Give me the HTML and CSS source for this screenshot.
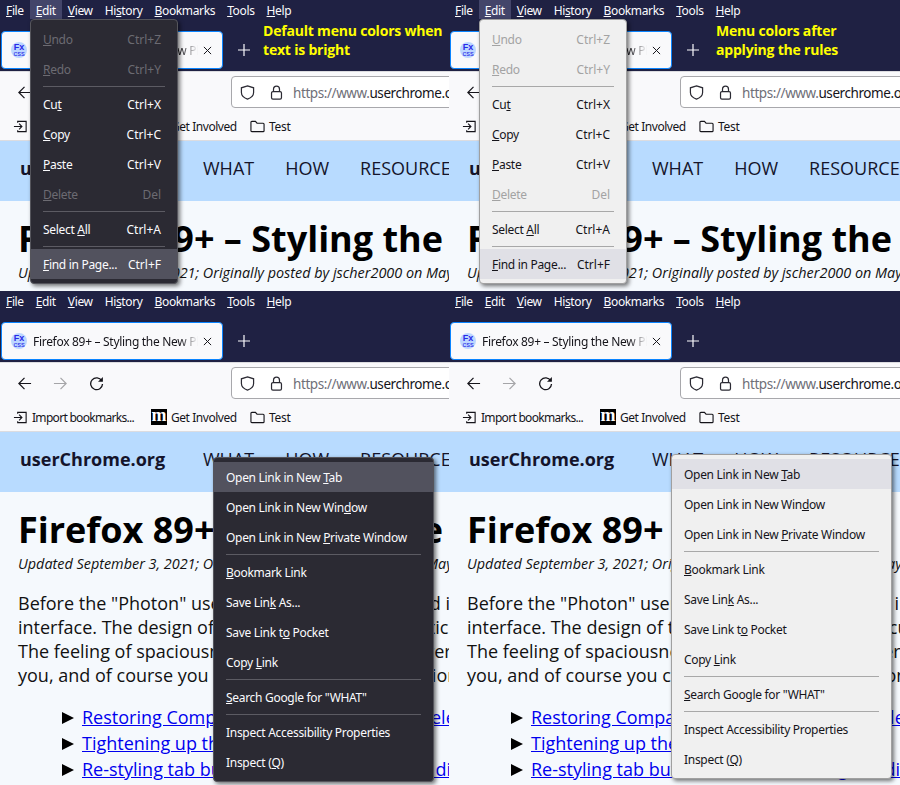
FILE: index.html
```html
<!DOCTYPE html>
<html lang="en">
<head>
  <meta charset="UTF-8" />
  <meta name="viewport" content="width=device-width, initial-scale=1.0" />
  <title>Firefox menu colors</title>
  <link rel="stylesheet" href="styles.css">
</head>
<body>
  <svg class="icon-defs" width="0" height="0">
    <symbol id="i-back" viewBox="0 0 16 16"><path d="M15 8H2M8 2L2 8l6 6" fill="none" stroke="currentColor" stroke-width="1.3"/></symbol>
    <symbol id="i-forward" viewBox="0 0 16 16"><path d="M1 8h13M8 2l6 6-6 6" fill="none" stroke="currentColor" stroke-width="1.3"/></symbol>
    <symbol id="i-reload" viewBox="0 0 16 16"><path d="M13.6 5.2A6.3 6.3 0 1 0 14.4 8.500" fill="none" stroke="currentColor" stroke-width="1.4"/><path d="M14.800 1v5.200H9.600z" fill="currentColor"/></symbol>
    <symbol id="i-shield" viewBox="0 0 16 16"><path d="M8 1l6.500 2v5c0 3.500-3 5.800-6.500 7C4.500 13.800 1.500 11.500 1.500 8V3z" fill="none" stroke="currentColor" stroke-width="1.3"/></symbol>
    <symbol id="i-lock" viewBox="0 0 16 16"><rect x="2.700" y="7" width="10.600" height="8" rx="1.500" fill="none" stroke="currentColor" stroke-width="1.3"/><path d="M4.800 7V4.500a3.200 3.200 0 0 1 6.400 0V7" fill="none" stroke="currentColor" stroke-width="1.3"/></symbol>
    <symbol id="i-import" viewBox="0 0 16 16"><path d="M5 4V2.500h9v11H5V12" fill="none" stroke="currentColor" stroke-width="1.200"/><path d="M1 8h8M6.500 5l3 3-3 3" fill="none" stroke="currentColor" stroke-width="1.200"/></symbol>
    <symbol id="i-folder" viewBox="0 0 16 16"><path d="M1 3.500q0-1 1-1h3.800l1.700 2H14q1 0 1 1v7q0 1-1 1H2q-1 0-1-1z" fill="none" stroke="currentColor" stroke-width="1.200"/></symbol>
    <symbol id="i-close" viewBox="0 0 10 10"><path d="M1 1l8 8M9 1l-8 8" fill="none" stroke="currentColor" stroke-width="1.100"/></symbol>
    <symbol id="i-plus" viewBox="0 0 12 12"><path d="M6 0v12M0 6h12" fill="none" stroke="currentColor" stroke-width="1.200"/></symbol>
  </svg>

  <div class="shots">

    <section class="shot shot-top">
      <nav class="menubar">
        <span class="mb-item"><u>F</u>ile</span><span class="mb-item active"><u>E</u>dit</span><span class="mb-item"><u>V</u>iew</span><span class="mb-item">Hi<u>s</u>tory</span><span class="mb-item"><u>B</u>ookmarks</span><span class="mb-item"><u>T</u>ools</span><span class="mb-item"><u>H</u>elp</span>
      </nav>
      <div class="tabbar">
        <div class="tab">
          <span class="favicon"><b>Fx</b><b class="fav-css">css</b></span>
          <span class="tab-title">Firefox 89+ – Styling the New Photon</span>
          <svg class="tab-close"><use href="#i-close"/></svg>
        </div>
        <svg class="new-tab"><use href="#i-plus"/></svg>
        <p class="caption caption-left">Default menu colors when<br>text is bright</p>
      </div>
      <div class="toolbar">
        <svg class="nav-icon"><use href="#i-back"/></svg>
        <svg class="nav-icon off"><use href="#i-forward"/></svg>
        <svg class="nav-icon"><use href="#i-reload"/></svg>
        <div class="urlbar">
          <svg class="url-icon"><use href="#i-shield"/></svg>
          <svg class="url-icon"><use href="#i-lock"/></svg>
          <span class="url"><span class="url-dim">https://www.</span>userchrome.org/firefox-89-styling-new-proton</span>
        </div>
      </div>
      <div class="bookmarks">
        <svg class="bm-icon"><use href="#i-import"/></svg><span class="bm-text bm-import">Import bookmarks...</span>
        <span class="bm-m">m</span><span class="bm-text bm-involved">Get Involved</span>
        <svg class="bm-icon"><use href="#i-folder"/></svg><span class="bm-text">Test</span>
      </div>
      <header class="site-head">
        <span class="site-name">userChrome.org</span>
        <span class="site-link">WHAT</span><span class="site-link">HOW</span><span class="site-link">RESOURCES</span>
      </header>
      <main class="article">
        <h1>Firefox 89+ – Styling the New Proton</h1>
        <p class="byline">Updated September 3, 2021; Originally posted by jscher2000 on May 24, 2021</p>
      </main>
      <div class="menu dark menu-edit">
        <div class="row off"><span><u>U</u>ndo</span><span>Ctrl+Z</span></div>
        <div class="row off"><span><u>R</u>edo</span><span>Ctrl+Y</span></div>
        <hr>
        <div class="row"><span>Cu<u>t</u></span><span>Ctrl+X</span></div>
        <div class="row"><span><u>C</u>opy</span><span>Ctrl+C</span></div>
        <div class="row"><span><u>P</u>aste</span><span>Ctrl+V</span></div>
        <div class="row off"><span><u>D</u>elete</span><span>Del</span></div>
        <hr>
        <div class="row"><span>Select <u>A</u>ll</span><span>Ctrl+A</span></div>
        <hr>
        <div class="row hover"><span><u>F</u>ind in Page...</span><span>Ctrl+F</span></div>
      </div>
    </section>

    <section class="shot shot-top">
      <nav class="menubar">
        <span class="mb-item"><u>F</u>ile</span><span class="mb-item active"><u>E</u>dit</span><span class="mb-item"><u>V</u>iew</span><span class="mb-item">Hi<u>s</u>tory</span><span class="mb-item"><u>B</u>ookmarks</span><span class="mb-item"><u>T</u>ools</span><span class="mb-item"><u>H</u>elp</span>
      </nav>
      <div class="tabbar">
        <div class="tab">
          <span class="favicon"><b>Fx</b><b class="fav-css">css</b></span>
          <span class="tab-title">Firefox 89+ – Styling the New Photon</span>
          <svg class="tab-close"><use href="#i-close"/></svg>
        </div>
        <svg class="new-tab"><use href="#i-plus"/></svg>
        <p class="caption caption-right">Menu colors after<br>applying the rules</p>
      </div>
      <div class="toolbar">
        <svg class="nav-icon"><use href="#i-back"/></svg>
        <svg class="nav-icon off"><use href="#i-forward"/></svg>
        <svg class="nav-icon"><use href="#i-reload"/></svg>
        <div class="urlbar">
          <svg class="url-icon"><use href="#i-shield"/></svg>
          <svg class="url-icon"><use href="#i-lock"/></svg>
          <span class="url"><span class="url-dim">https://www.</span>userchrome.org/firefox-89-styling-new-proton</span>
        </div>
      </div>
      <div class="bookmarks">
        <svg class="bm-icon"><use href="#i-import"/></svg><span class="bm-text bm-import">Import bookmarks...</span>
        <span class="bm-m">m</span><span class="bm-text bm-involved">Get Involved</span>
        <svg class="bm-icon"><use href="#i-folder"/></svg><span class="bm-text">Test</span>
      </div>
      <header class="site-head">
        <span class="site-name">userChrome.org</span>
        <span class="site-link">WHAT</span><span class="site-link">HOW</span><span class="site-link">RESOURCES</span>
      </header>
      <main class="article">
        <h1>Firefox 89+ – Styling the New Proton</h1>
        <p class="byline">Updated September 3, 2021; Originally posted by jscher2000 on May 24, 2021</p>
      </main>
      <div class="menu light menu-edit">
        <div class="row off"><span><u>U</u>ndo</span><span>Ctrl+Z</span></div>
        <div class="row off"><span><u>R</u>edo</span><span>Ctrl+Y</span></div>
        <hr>
        <div class="row"><span>Cu<u>t</u></span><span>Ctrl+X</span></div>
        <div class="row"><span><u>C</u>opy</span><span>Ctrl+C</span></div>
        <div class="row"><span><u>P</u>aste</span><span>Ctrl+V</span></div>
        <div class="row off"><span><u>D</u>elete</span><span>Del</span></div>
        <hr>
        <div class="row"><span>Select <u>A</u>ll</span><span>Ctrl+A</span></div>
        <hr>
        <div class="row hover"><span><u>F</u>ind in Page...</span><span>Ctrl+F</span></div>
      </div>
    </section>

    <section class="shot">
      <nav class="menubar">
        <span class="mb-item"><u>F</u>ile</span><span class="mb-item"><u>E</u>dit</span><span class="mb-item"><u>V</u>iew</span><span class="mb-item">Hi<u>s</u>tory</span><span class="mb-item"><u>B</u>ookmarks</span><span class="mb-item"><u>T</u>ools</span><span class="mb-item"><u>H</u>elp</span>
      </nav>
      <div class="tabbar">
        <div class="tab">
          <span class="favicon"><b>Fx</b><b class="fav-css">css</b></span>
          <span class="tab-title">Firefox 89+ – Styling the New Photon</span>
          <svg class="tab-close"><use href="#i-close"/></svg>
        </div>
        <svg class="new-tab"><use href="#i-plus"/></svg>
      </div>
      <div class="toolbar">
        <svg class="nav-icon"><use href="#i-back"/></svg>
        <svg class="nav-icon off"><use href="#i-forward"/></svg>
        <svg class="nav-icon"><use href="#i-reload"/></svg>
        <div class="urlbar">
          <svg class="url-icon"><use href="#i-shield"/></svg>
          <svg class="url-icon"><use href="#i-lock"/></svg>
          <span class="url"><span class="url-dim">https://www.</span>userchrome.org/firefox-89-styling-new-proton</span>
        </div>
      </div>
      <div class="bookmarks">
        <svg class="bm-icon"><use href="#i-import"/></svg><span class="bm-text bm-import">Import bookmarks...</span>
        <span class="bm-m">m</span><span class="bm-text bm-involved">Get Involved</span>
        <svg class="bm-icon"><use href="#i-folder"/></svg><span class="bm-text">Test</span>
      </div>
      <header class="site-head">
        <span class="site-name">userChrome.org</span>
        <span class="site-link">WHAT</span><span class="site-link">HOW</span><span class="site-link">RESOURCES</span>
      </header>
      <main class="article">
        <h1>Firefox 89+ – Styling the New Proton</h1>
        <p class="byline">Updated September 3, 2021; Originally posted by jscher2000 on May 24, 2021</p>
        <p class="lead">Before the "Photon" user interface was introduced in<br>interface. The design of the tab bars was also particular<br>The feeling of spaciousness is greater in your newer<br>you, and of course you can also replace these options</p>
        <ul class="links">
          <li><a href="#">Restoring Compact Mode and Tab Styling elements</a></li>
          <li><a href="#">Tightening up the menus and bars</a></li>
          <li><a href="#">Re-styling tab button and then adding the dividers</a></li>
        </ul>
      </main>
      <div class="menu dark menu-link">
        <div class="row hover"><span>Open Link in New <u>T</u>ab</span></div>
        <div class="row"><span>Open Link in New Win<u>d</u>ow</span></div>
        <div class="row"><span>Open Link in New <u>P</u>rivate Window</span></div>
        <hr>
        <div class="row"><span><u>B</u>ookmark Link</span></div>
        <div class="row"><span>Save Lin<u>k</u> As...</span></div>
        <div class="row"><span>Save Link t<u>o</u> Pocket</span></div>
        <div class="row"><span>Copy <u>L</u>ink</span></div>
        <hr>
        <div class="row"><span><u>S</u>earch Google for "WHAT"</span></div>
        <hr>
        <div class="row"><span>Inspect Accessibility Properties</span></div>
        <div class="row"><span>Inspect (<u>Q</u>)</span></div>
      </div>
    </section>

    <section class="shot">
      <nav class="menubar">
        <span class="mb-item"><u>F</u>ile</span><span class="mb-item"><u>E</u>dit</span><span class="mb-item"><u>V</u>iew</span><span class="mb-item">Hi<u>s</u>tory</span><span class="mb-item"><u>B</u>ookmarks</span><span class="mb-item"><u>T</u>ools</span><span class="mb-item"><u>H</u>elp</span>
      </nav>
      <div class="tabbar">
        <div class="tab">
          <span class="favicon"><b>Fx</b><b class="fav-css">css</b></span>
          <span class="tab-title">Firefox 89+ – Styling the New Photon</span>
          <svg class="tab-close"><use href="#i-close"/></svg>
        </div>
        <svg class="new-tab"><use href="#i-plus"/></svg>
      </div>
      <div class="toolbar">
        <svg class="nav-icon"><use href="#i-back"/></svg>
        <svg class="nav-icon off"><use href="#i-forward"/></svg>
        <svg class="nav-icon"><use href="#i-reload"/></svg>
        <div class="urlbar">
          <svg class="url-icon"><use href="#i-shield"/></svg>
          <svg class="url-icon"><use href="#i-lock"/></svg>
          <span class="url"><span class="url-dim">https://www.</span>userchrome.org/firefox-89-styling-new-proton</span>
        </div>
      </div>
      <div class="bookmarks">
        <svg class="bm-icon"><use href="#i-import"/></svg><span class="bm-text bm-import">Import bookmarks...</span>
        <span class="bm-m">m</span><span class="bm-text bm-involved">Get Involved</span>
        <svg class="bm-icon"><use href="#i-folder"/></svg><span class="bm-text">Test</span>
      </div>
      <header class="site-head">
        <span class="site-name">userChrome.org</span>
        <span class="site-link">WHAT</span><span class="site-link">HOW</span><span class="site-link">RESOURCES</span>
      </header>
      <main class="article">
        <h1>Firefox 89+ – Styling the New Proton</h1>
        <p class="byline">Updated September 3, 2021; Originally posted by jscher2000 on May 24, 2021</p>
        <p class="lead">Before the "Photon" user interface was introduced in<br>interface. The design of the tab bars was also particular<br>The feeling of spaciousness is greater in your newer<br>you, and of course you can also replace these options</p>
        <ul class="links">
          <li><a href="#">Restoring Compact Mode and Tab Styling elements</a></li>
          <li><a href="#">Tightening up the menus and bars</a></li>
          <li><a href="#">Re-styling tab button and then adding the dividers</a></li>
        </ul>
      </main>
      <div class="menu light menu-link menu-link-right">
        <div class="row hover"><span>Open Link in New <u>T</u>ab</span></div>
        <div class="row"><span>Open Link in New Win<u>d</u>ow</span></div>
        <div class="row"><span>Open Link in New <u>P</u>rivate Window</span></div>
        <hr>
        <div class="row"><span><u>B</u>ookmark Link</span></div>
        <div class="row"><span>Save Lin<u>k</u> As...</span></div>
        <div class="row"><span>Save Link t<u>o</u> Pocket</span></div>
        <div class="row"><span>Copy <u>L</u>ink</span></div>
        <hr>
        <div class="row"><span><u>S</u>earch Google for "WHAT"</span></div>
        <hr>
        <div class="row"><span>Inspect Accessibility Properties</span></div>
        <div class="row"><span>Inspect (<u>Q</u>)</span></div>
      </div>
    </section>

  </div>
</body>
</html>
```

FILE: styles.css
```css
html, body {
  margin: 0;
  padding: 0;
}
body {
  width: 900px;
  height: 785px;
  overflow: hidden;
  font-family: "Noto Sans", "Open Sans", sans-serif;
  background: #f5f9fd;
}
.icon-defs {
  position: absolute;
}
.shots {
  display: grid;
  grid-template-columns: 449px 451px;
  grid-template-rows: 291px 494px;
}
.shot {
  position: relative;
  overflow: hidden;
  background: #f5f9fd;
}

/* browser chrome */
.menubar {
  display: flex;
  height: 20px;
  background: #1f2143;
  color: #fbfbfe;
  font-size: 12px;
  letter-spacing: -0.36px;
  line-height: 21px;
}
.mb-item {
  padding: 0 6px;
}
.mb-item.active {
  background: #43456a;
  height: 19px;
}
.tabbar {
  display: flex;
  align-items: flex-start;
  height: 51px;
  padding-left: 1px;
  background: #1f2143;
  box-sizing: border-box;
}
.tab {
  display: flex;
  align-items: center;
  flex: none;
  width: 222px;
  height: 38px;
  margin-top: 11px;
  box-sizing: border-box;
  padding: 0 10px 0 9px;
  background: #f9f9fb;
  border: 1px solid #0a84ff;
  border-radius: 4px;
  font-size: 12px;
  letter-spacing: -0.3px;
  color: #15141a;
}
.favicon {
  display: flex;
  flex-direction: column;
  align-items: center;
  justify-content: center;
  flex: none;
  width: 16px;
  height: 16px;
  border-radius: 50%;
  background: #bcd6ff;
  color: #2a2ae8;
  font-family: "Liberation Sans", sans-serif;
  font-size: 9px;
  line-height: 7px;
  letter-spacing: 0;
}
.fav-css {
  font-size: 7.5px;
  font-weight: 400;
  line-height: 6px;
}
.tab-title {
  flex: 1;
  margin-left: 6px;
  overflow: hidden;
  white-space: nowrap;
  -webkit-mask-image: linear-gradient(to left, transparent 0, #000 18px);
  mask-image: linear-gradient(to left, transparent 0, #000 18px);
}
.tab-close {
  flex: none;
  width: 9px;
  height: 9px;
  margin-left: 5px;
  color: #15141a;
}
.new-tab {
  flex: none;
  width: 12px;
  height: 12px;
  margin: 24px 0 0 15px;
  color: #fbfbfe;
}
.caption {
  margin: 0;
  color: #ffff00;
  font-family: "Open Sans", sans-serif;
  font-size: 14px;
  font-weight: 700;
  letter-spacing: -0.2px;
  line-height: 19px;
}
.caption-left {
  margin: 1px 0 0 13px;
}
.caption-right {
  margin: 1px 0 0 17px;
}
.toolbar {
  display: flex;
  align-items: center;
  height: 39px;
  padding: 2px 0 0 17px;
  background: #f9f9fb;
  border-top: 1px solid #dcdce0;
  box-sizing: border-box;
}
.nav-icon {
  flex: none;
  width: 15px;
  height: 15px;
  margin-right: 21px;
  color: #15141a;
}
.nav-icon.off {
  color: #a5a5a8;
}
.urlbar {
  display: flex;
  align-items: center;
  flex: none;
  width: 420px;
  height: 32px;
  margin-left: 106px;
  box-sizing: border-box;
  padding-left: 8px;
  background: #fff;
  border: 1px solid #a8a8ac;
  border-radius: 4px;
  font-size: 13.5px;
  letter-spacing: -0.42px;
  color: #15141a;
  white-space: nowrap;
}
.url-icon {
  flex: none;
  width: 15px;
  height: 15px;
  margin-right: 14px;
  color: #2b2a33;
}
.url {
  margin: 2px 0 0 -5px;
}
.url-dim {
  color: #6f6f78;
}
.bookmarks {
  display: flex;
  align-items: center;
  height: 31px;
  padding: 2px 0 0 13px;
  background: #f9f9fb;
  border-bottom: 1px solid #dcdce0;
  box-sizing: border-box;
  font-size: 12px;
  letter-spacing: -0.3px;
  color: #15141a;
}
.bm-icon {
  flex: none;
  width: 15px;
  height: 15px;
  margin-right: 4px;
  color: #15141a;
}
.bm-text {
  white-space: nowrap;
}
.bm-import {
  flex: none;
  width: 119px;
  letter-spacing: -0.7px;
}
.bm-involved {
  flex: none;
  width: 79px;
  letter-spacing: -0.45px;
}
.bm-m {
  flex: none;
  width: 16px;
  height: 16px;
  margin-right: 4px;
  background: #000;
  color: #fff;
  font-family: "Liberation Serif", serif;
  font-size: 18px;
  font-weight: 700;
  line-height: 12px;
  letter-spacing: 0;
  text-align: center;
}

/* page */
.site-head {
  display: flex;
  align-items: center;
  height: 60px;
  box-sizing: border-box;
  padding: 0 0 6px 20px;
  background: #b8dbff;
  font-family: "Open Sans", sans-serif;
  font-size: 18px;
  color: #14142b;
  white-space: nowrap;
}
.site-name {
  flex: none;
  width: 183px;
  font-weight: 700;
}
.site-link {
  flex: none;
  margin-right: 31px;
}
.article {
  padding: 16px 0 0 18px;
  font-family: "Open Sans", sans-serif;
  color: #111;
  white-space: nowrap;
}
.article h1 {
  margin: 0;
  font-size: 36px;
  line-height: 44px;
  color: #000;
}
.byline {
  margin: 2px 0 0;
  font-size: 14.4px;
  font-style: italic;
  line-height: 20px;
}
.lead {
  margin: 17px 0 0;
  font-size: 18px;
  line-height: 24px;
}
.links {
  margin: 17px 0 0;
  padding: 0 0 0 44px;
  list-style: none;
  font-size: 18px;
  line-height: 26px;
}
.links li::before {
  content: "";
  display: inline-block;
  width: 0;
  height: 0;
  margin-right: 8px;
  border-left: 12px solid #000;
  border-top: 6.5px solid transparent;
  border-bottom: 6.5px solid transparent;
}
.links a {
  color: #0000ee;
}

/* popup menus, these lie over the page */
.menu {
  position: absolute;
  box-sizing: border-box;
  padding: 4px 0;
  border-radius: 4px;
  font-size: 12px;
  letter-spacing: -0.3px;
  box-shadow: 2px 2px 4px rgba(0, 0, 0, 0.55);
}
.menu hr {
  height: 1px;
  margin: 2px 12px;
  border: 0;
}
.row {
  display: flex;
  justify-content: space-between;
  height: 30px;
  box-sizing: border-box;
  padding: 2px 16px 0 12px;
  line-height: 28px;
  white-space: nowrap;
}
.row span + span {
  letter-spacing: 0;
}
.menu.dark {
  background: #2b2a33;
  border: 1px solid #55555c;
  color: #fbfbfe;
}
.dark hr {
  background: #5c5b63;
}
.dark .row.off {
  color: #6c6b72;
}
.dark .row.hover {
  background: #52525e;
}
.menu.light {
  background: #f0f0f0;
  border: 1px solid #a0a0a0;
  color: #15141a;
}
.light hr {
  background: #a8a8a8;
}
.light .row.off {
  color: #a3a3a3;
}
.light .row.hover {
  background: #e0e0e6;
}
.menu-edit {
  left: 30px;
  top: 19px;
  width: 148px;
  height: 265px;
}
.menu-link {
  left: 213px;
  top: 166px;
  width: 221px;
  height: 325px;
}
.menu-link-right {
  left: 222px;
  top: 163px;
}
```
